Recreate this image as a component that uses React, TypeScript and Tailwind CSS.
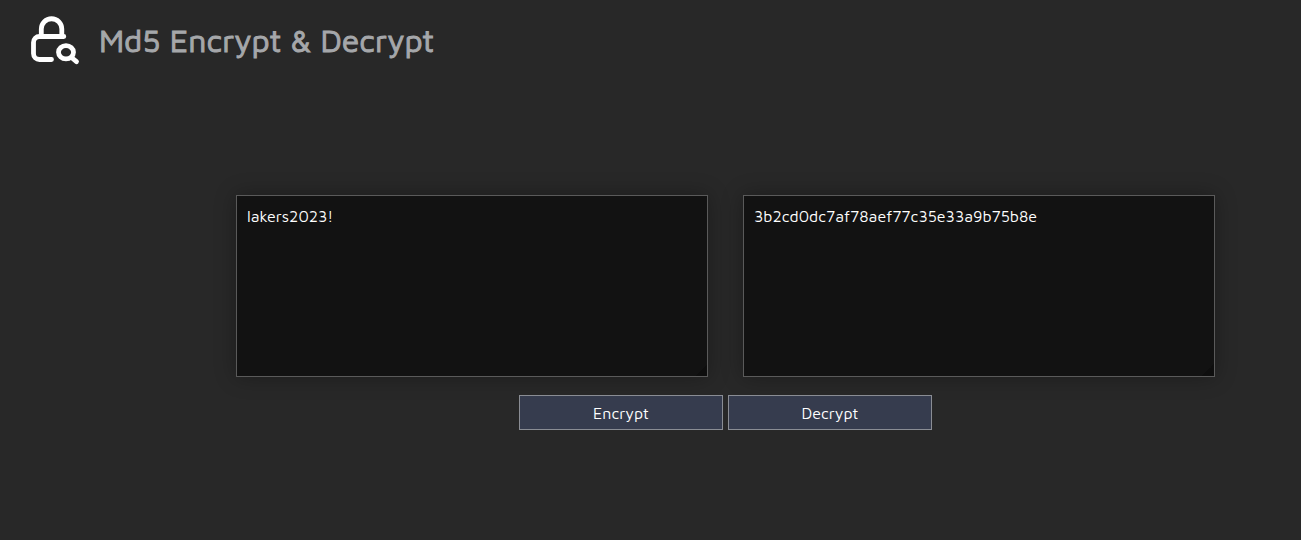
import { useState } from "react";

function LockSearchIcon() {
  return (
    <svg
      className="h-14 w-14 shrink-0"
      viewBox="0 0 56 56"
      fill="none"
      stroke="#ffffff"
      strokeWidth="4.8"
      strokeLinecap="round"
      strokeLinejoin="round"
      aria-hidden="true"
    >
      <path d="M14.3 24.5V17a10 10 0 0 1 20.5 0v7.5" />
      <path d="M36.8 24.5H12.5a6 6 0 0 0-6 6v11a6 6 0 0 0 6 6H24.5" />
      <ellipse cx="39" cy="40.300" rx="7.500" ry="6.600" />
      <path d="M44.500 45.500l5 4.200" />
    </svg>
  );
}

const boxClass =
  "block h-[182px] min-w-0 flex-1 resize rounded-none border border-[#5a5a5a] bg-[#121212] px-2.5 py-2.5 text-base leading-5 text-white shadow-[0_0_20px_rgba(0,0,0,0.3)] outline-none [&::-webkit-resizer]:bg-[linear-gradient(135deg,transparent_60%,#0e0e0e_60%)]";

const buttonClass =
  "h-[35px] w-[204px] border border-[#8a8d94] bg-[#363c4e] pt-px text-base leading-5 text-white hover:bg-[#424960]";

export default function App() {
  const [plain, setPlain] = useState("lakers2023!");
  const [hash, setHash] = useState("3b2cd0dc7af78aef77c35e33a9b75b8e");

  return (
    <div className="min-h-screen bg-[#282828] font-['Maven_Pro','Noto_Sans',sans-serif]">
      <header className="flex h-20 items-center gap-4 pl-[27px]">
        <LockSearchIcon />
        <h1 className="text-[32px] leading-10 font-normal text-[#a5a7aa] [-webkit-text-stroke:1px_#a5a7aa]">
          Md5 Encrypt &amp; Decrypt
        </h1>
      </header>
      <main className="pt-[115px] pr-4 pl-[166px]">
        <form
          className="mx-auto max-w-[979px]"
          onSubmit={(event) => event.preventDefault()}
        >
          <div className="flex gap-[35px]">
            <textarea
              aria-label="Text"
              className={boxClass}
              spellCheck={false}
              value={plain}
              onChange={(event) => setPlain(event.target.value)}
            />
            <textarea
              aria-label="Md5 hash"
              className={boxClass}
              spellCheck={false}
              value={hash}
              onChange={(event) => setHash(event.target.value)}
            />
          </div>
          <div className="mt-[18px] flex justify-center gap-[5px]">
            <button type="button" className={buttonClass}>
              Encrypt
            </button>
            <button type="button" className={buttonClass}>
              Decrypt
            </button>
          </div>
        </form>
      </main>
    </div>
  );
}
